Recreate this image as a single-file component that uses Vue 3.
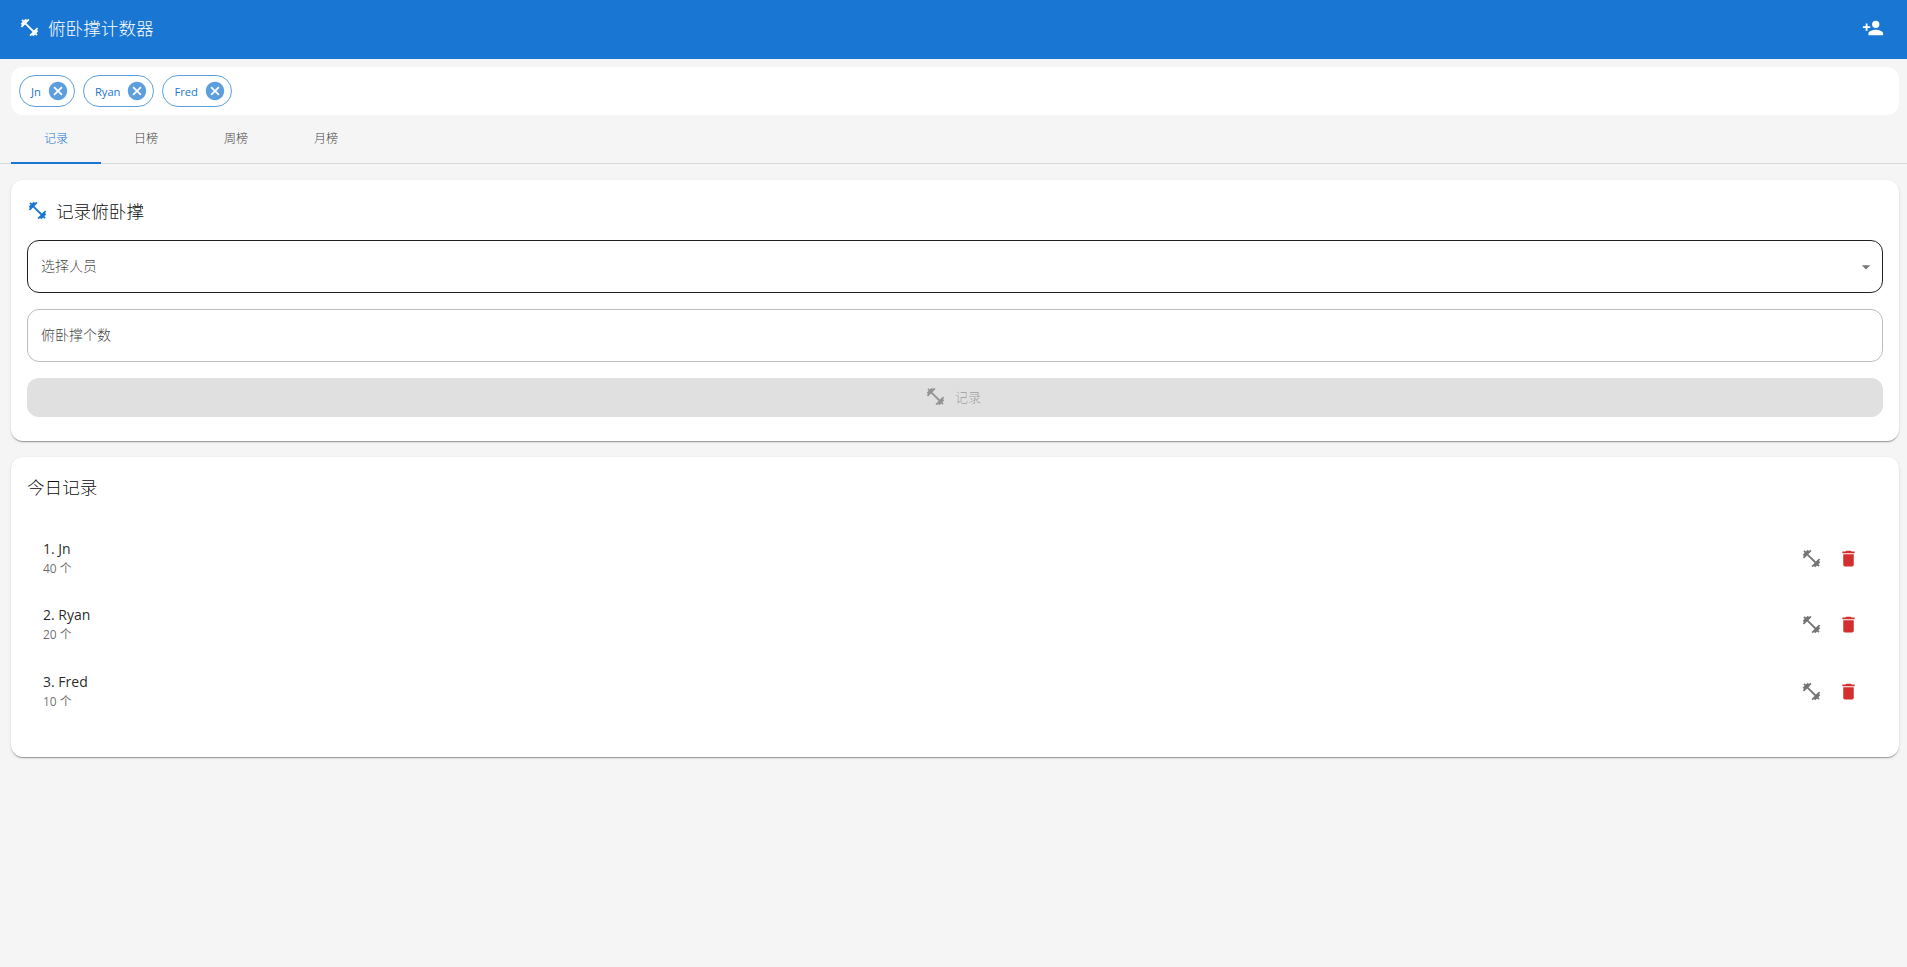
<template>
  <div class="page">
    <header class="app-bar">
      <svg class="icon" viewBox="0 0 24 24"><path :d="icons.dumbbell" /></svg>
      <span class="app-title">俯卧撑计数器</span>
      <button type="button" class="add-user" aria-label="添加人员">
        <svg class="icon" viewBox="0 0 24 24"><path :d="icons.accountPlus" /></svg>
      </button>
    </header>

    <main class="content">
      <div class="chip-bar">
        <span v-for="name in people" :key="name" class="chip">
          {{ name }}
          <svg class="chip-close" viewBox="0 0 24 24"><path :d="icons.closeCircle" /></svg>
        </span>
      </div>

      <nav class="tabs">
        <button
          v-for="(tab, i) in tabs"
          :key="tab"
          type="button"
          class="tab"
          :class="{ active: i === 0 }"
        >
          {{ tab }}
        </button>
      </nav>

      <section class="card form-card">
        <h2 class="card-title">
          <svg class="icon title-icon" viewBox="0 0 24 24"><path :d="icons.dumbbell" /></svg>
          记录俯卧撑
        </h2>
        <div class="field focused">
          <span>选择人员</span>
          <svg class="menu-icon" viewBox="0 0 24 24"><path :d="icons.menuDown" /></svg>
        </div>
        <div class="field"><span>俯卧撑个数</span></div>
        <button type="button" class="submit" disabled>
          <svg class="icon" viewBox="0 0 24 24"><path :d="icons.dumbbell" /></svg>
          记录
        </button>
      </section>

      <section class="card list-card">
        <h2 class="card-title">今日记录</h2>
        <ul class="records">
          <li v-for="(r, i) in records" :key="r.name" class="record">
            <div class="record-text">
              <div class="record-name">{{ i + 1 }}. {{ r.name }}</div>
              <div class="record-count">{{ r.count }} 个</div>
            </div>
            <svg class="icon action grey" viewBox="0 0 24 24"><path :d="icons.dumbbell" /></svg>
            <svg class="icon action red" viewBox="0 0 24 24"><path :d="icons.trash" /></svg>
          </li>
        </ul>
      </section>
    </main>
  </div>
</template>

<script setup>
const icons = {
  dumbbell:
    'M20.57,14.86L22,13.43L20.57,12L17,15.57L8.43,7L12,3.43L10.57,2L9.14,3.43L7.71,2L5.57,4.14L4.14,2.71L2.71,4.14L4.14,5.57L2,7.71L3.43,9.14L2,10.57L3.43,12L7,8.43L15.57,17L12,20.57L13.43,22L14.86,20.57L16.29,22L18.43,19.86L19.86,21.29L21.29,19.86L19.86,18.43L22,16.29L20.57,14.86Z',
  accountPlus:
    'M15,14C12.33,14 7,15.33 7,18V20H23V18C23,15.33 17.67,14 15,14M6,10V7H4V10H1V12H4V15H6V12H9V10M15,12A4,4 0 0,0 19,8A4,4 0 0,0 15,4A4,4 0 0,0 11,8A4,4 0 0,0 15,12Z',
  closeCircle:
    'M12,2C17.53,2 22,6.47 22,12C22,17.53 17.53,22 12,22C6.47,22 2,17.53 2,12C2,6.47 6.47,2 12,2M15.59,7L12,10.59L8.41,7L7,8.41L10.59,12L7,15.59L8.41,17L12,13.41L15.59,17L17,15.59L13.41,12L17,8.41L15.59,7Z',
  trash: 'M19,4H15.5L14.5,3H9.5L8.5,4H5V6H19M6,19A2,2 0 0,0 8,21H16A2,2 0 0,0 18,19V7H6V19Z',
  menuDown: 'M7,10L12,15L17,10H7Z',
}

const people = ['Jn', 'Ryan', 'Fred']
const tabs = ['记录', '日榜', '周榜', '月榜']
const records = [
  { name: 'Jn', count: 40 },
  { name: 'Ryan', count: 20 },
  { name: 'Fred', count: 10 },
]
</script>

<style>
html,
body {
  background: #f5f5f5;
}
</style>

<style scoped>
.page {
  min-height: 967px;
  background: #f5f5f5;
  font-family: "Open Sans", "Noto Sans CJK SC", sans-serif;
  color: rgba(0, 0, 0, 0.87);
}

.icon {
  width: 21px;
  height: 21px;
  flex: none;
  fill: currentColor;
}

.app-bar {
  height: 59px;
  display: flex;
  align-items: center;
  gap: 8px;
  padding: 0 23px 4px 19px;
  box-sizing: border-box;
  background: #1976d2;
  color: #fff;
}

.app-title {
  font-size: 17.6px;
  font-weight: 300;
}

.add-user {
  margin-left: auto;
  width: 22px;
  height: 22px;
  padding: 0;
  display: flex;
  align-items: center;
  justify-content: center;
  border: 0;
  background: none;
  color: inherit;
}

.add-user .icon {
  width: 22px;
  height: 22px;
}

.content {
  padding: 8px 8px 0 11px;
}

.chip-bar {
  display: flex;
  gap: 8px;
  height: 48px;
  padding: 8px;
  box-sizing: border-box;
  background: #fff;
  border-radius: 12px;
}

.chip {
  display: flex;
  align-items: center;
  height: 32px;
  box-sizing: border-box;
  padding: 0 5px 0 11px;
  gap: 6px;
  border: 1px solid rgba(25, 118, 210, 0.7);
  border-radius: 16px;
  color: #1976d2;
  font-size: 11.2px;
}

.chip-close {
  width: 22px;
  height: 22px;
  fill: #1976d2;
  opacity: 0.7;
}

.tabs {
  display: flex;
  height: 49px;
  margin: 0 -8px 0 -11px;
  padding-left: 11px;
  border-bottom: 1px solid #d9d9d9;
  box-sizing: border-box;
}

.tab {
  width: 90px;
  padding: 0 0 1px;
  border: 0;
  border-bottom: 2px solid transparent;
  margin-bottom: -1px;
  background: none;
  font: inherit;
  font-size: 12px;
  font-weight: 300;
  color: rgba(0, 0, 0, 0.78);
}

.tab.active {
  color: #1976d2;
  border-bottom-color: #1976d2;
}

.card {
  background: #fff;
  border-radius: 12px;
  box-shadow: 0 2px 1px -1px rgba(0, 0, 0, 0.2), 0 1px 1px 0 rgba(0, 0, 0, 0.14),
    0 1px 3px 0 rgba(0, 0, 0, 0.12);
}

.form-card {
  margin-top: 16px;
  height: 261px;
  padding: 16px;
  box-sizing: border-box;
  display: flex;
  flex-direction: column;
}

.card-title {
  margin: 0;
  display: flex;
  align-items: center;
  height: 28px;
  font-size: 17.6px;
  font-weight: 300;
  color: rgba(0, 0, 0, 0.96);
}

.title-icon {
  margin-right: 8px;
  color: #1976d2;
}

.field {
  height: 53px;
  display: flex;
  align-items: center;
  justify-content: space-between;
  padding: 0 6px 3px 13px;
  margin-bottom: 16px;
  border: 1px solid rgba(0, 0, 0, 0.26);
  border-radius: 12px;
  box-sizing: border-box;
  font-size: 14px;
  font-weight: 300;
  color: rgba(0, 0, 0, 0.78);
}

.form-card .card-title {
  margin-bottom: 16px;
}

.field.focused {
  border-color: rgba(0, 0, 0, 0.87);
}

.menu-icon {
  width: 20px;
  height: 20px;
  margin-top: 3px;
  fill: rgba(0, 0, 0, 0.54);
}

.submit {
  height: 39px;
  display: flex;
  align-items: center;
  justify-content: center;
  gap: 9px;
  padding: 0 4px 2px 0;
  border: 0;
  border-radius: 12px;
  background: #e0e0e0;
  font: inherit;
  font-size: 13px;
  font-weight: 300;
  color: rgba(0, 0, 0, 0.34);
}

.list-card {
  margin-top: 16px;
  height: 300px;
  padding: 15px 16px 0;
  box-sizing: border-box;
}

.records {
  list-style: none;
  margin: 25px 0 0;
  padding: 0 0 0 16px;
}

.record {
  height: 66.5px;
  display: flex;
  align-items: center;
  gap: 16px;
  padding-right: 24px;
}

.record-text {
  flex: 1;
}

.record-name {
  font-size: 14px;
  line-height: 20px;
}

.record-count {
  margin-top: 1px;
  font-size: 12px;
  line-height: 18px;
  color: rgba(0, 0, 0, 0.6);
}

.action.grey {
  color: #757575;
}

.action.red {
  color: #d32f2f;
}
</style>
